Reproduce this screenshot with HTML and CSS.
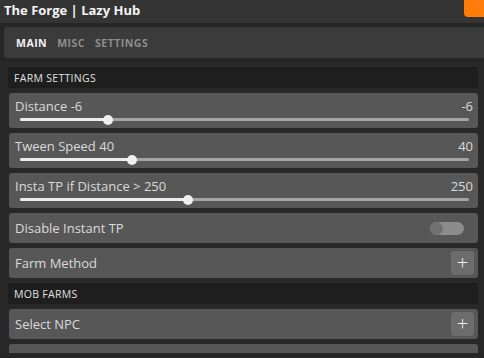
FILE: index.html
```html
<!DOCTYPE html>
<html lang="en">
<head>
  <meta charset="UTF-8">
  <title>The Forge | Lazy Hub</title>
  <link rel="stylesheet" href="styles.css">
</head>
<body>

<div class="titlebar">
  <span class="title">The Forge | Lazy Hub</span>
  <span class="close-btn"></span>
</div>

<div class="tabs">
  <span class="tab active">MAIN</span>
  <span class="tab">MISC</span>
  <span class="tab">SETTINGS</span>
</div>

<div class="content">
  <div class="section">FARM SETTINGS</div>

  <div class="row slider-row">
    <div class="slider-top">
      <span>Distance -6</span>
      <span>-6</span>
    </div>
    <div class="track"><div class="fill" style="width:19.6%"><span class="knob"></span></div></div>
  </div>

  <div class="row slider-row">
    <div class="slider-top">
      <span>Tween Speed 40</span>
      <span>40</span>
    </div>
    <div class="track"><div class="fill" style="width:24.9%"><span class="knob"></span></div></div>
  </div>

  <div class="row slider-row">
    <div class="slider-top">
      <span>Insta TP if Distance &gt; 250</span>
      <span>250</span>
    </div>
    <div class="track"><div class="fill" style="width:37.4%"><span class="knob"></span></div></div>
  </div>

  <div class="row">
    <span>Disable Instant TP</span>
    <span class="toggle"><span class="toggle-knob"></span></span>
  </div>

  <div class="row">
    <span>Farm Method</span>
    <span class="plus">+</span>
  </div>

  <div class="section">MOB FARMS</div>

  <div class="row">
    <span>Select NPC</span>
    <span class="plus">+</span>
  </div>

  <!-- next row is clipped by the scroll area -->
  <div class="row row-end">
    <span class="toggle"><span class="toggle-knob"></span></span>
  </div>
</div>

</body>
</html>
```

FILE: styles.css
```css
body {
  margin: 0;
  width: 484px;
  height: 358px;
  overflow: hidden;
  background: #262626;
  font-family: "Open Sans", "Noto Sans", sans-serif;
  color: #dcdcdc;
}
.titlebar {
  height: 23px;
  background: #343434;
  display: flex;
  justify-content: space-between;
  align-items: flex-start;
  margin-bottom: 4px;
}
.title {
  font-weight: 700;
  font-size: 13px;
  color: #f4f4f4;
  padding: 1px 0 0 4px;
  line-height: 18px;
}
.close-btn {
  width: 20px;
  height: 17px;
  background: #ff7b0a;
  border-bottom-left-radius: 4px;
}
.tabs {
  margin-left: 4px;
  height: 31px;
  background: #3b3b3b;
  border-radius: 3px 0 0 3px;
  display: flex;
  align-items: center;
  gap: 10px;
  padding-left: 12px;
  margin-bottom: 4px;
}
.tab {
  font-size: 10.5px;
  font-weight: 700;
  color: #8e8e8e;
  letter-spacing: 0.5px;
}
.tab.active {
  color: #f2f2f2;
}
.content {
  height: 286px;
  overflow: hidden;
  background: #282828;
  padding: 5px 6px 0 9px;
  display: flex;
  flex-direction: column;
  gap: 5px;
}
.section {
  height: 21px;
  flex-shrink: 0;
  background: #1e1e1e;
  margin-left: -1px;
  font-size: 10.5px;
  color: #e0e0e0;
  display: flex;
  align-items: center;
  padding-left: 6px;
  letter-spacing: 0.3px;
}
.row {
  height: 30px;
  flex-shrink: 0;
  background: #575757;
  border-radius: 3px;
  display: flex;
  align-items: center;
  justify-content: space-between;
  padding: 0 4px 0 6px;
  font-size: 13px;
  color: #dadada;
}
.row-end {
  justify-content: flex-end;
}
.slider-row {
  height: 35px;
  flex-direction: column;
  align-items: stretch;
  justify-content: flex-start;
  padding: 5px 5px 0 6px;
  box-sizing: border-box;
}
.slider-top {
  display: flex;
  justify-content: space-between;
  line-height: 17px;
  font-size: 13px;
}
.track {
  margin: 3px 4px 0 5px;
  height: 3px;
  background: #a3a3a3;
  border-radius: 2px;
}
.fill {
  height: 3px;
  background: #ececec;
  border-radius: 2px;
  position: relative;
}
.knob {
  position: absolute;
  right: -5px;
  top: -3.5px;
  width: 10px;
  height: 10px;
  border-radius: 50%;
  background: #f0f0f0;
}
.toggle {
  width: 34px;
  height: 13px;
  background: #8c8c8c;
  border-radius: 7px;
  margin-right: 10px;
  display: flex;
  align-items: center;
}
.toggle-knob {
  width: 13px;
  height: 13px;
  border-radius: 50%;
  background: #717171;
}
.plus {
  width: 23px;
  height: 24px;
  background: #6c6c6c;
  border-radius: 3px;
  color: #f2f2f2;
  font-size: 20px;
  line-height: 23px;
  text-align: center;
  font-weight: 300;
}
```
